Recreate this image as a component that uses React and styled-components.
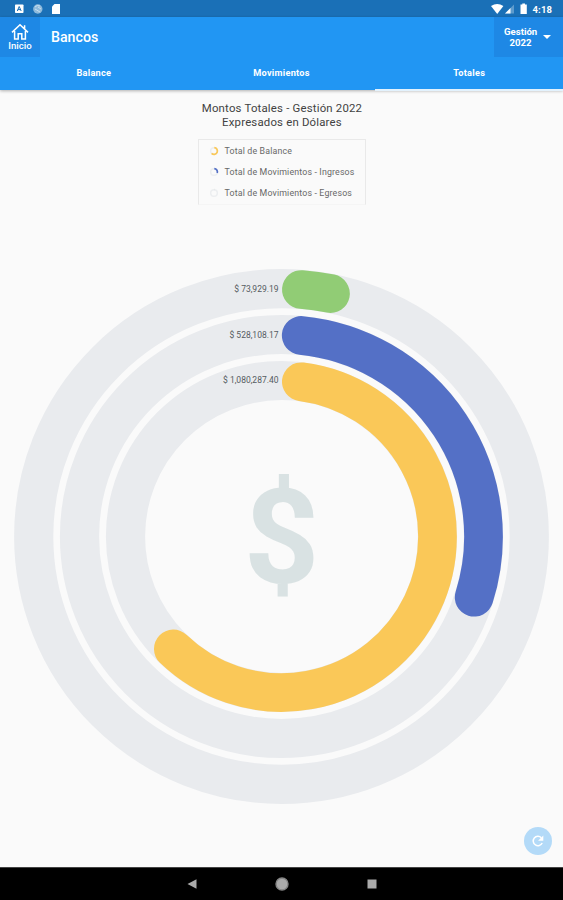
import React from "react";
import styled, { createGlobalStyle } from "styled-components";

const GlobalStyle = createGlobalStyle`
  * {
    box-sizing: border-box;
  }

  body {
    margin: 0;
    background-color: #fafafa;
    font-family: Roboto, "Liberation Sans", sans-serif;
  }
`;

const Screen = styled.div`
  display: flex;
  flex-direction: column;
  width: 563px;
  height: 900px;
  overflow: hidden;
  background-color: #fafafa;
`;

const StatusBar = styled.div`
  display: flex;
  flex: none;
  justify-content: space-between;
  height: 17px;
  padding: 0 11px 0 14px;
  background-color: #1a70b7;
  color: white;
`;

const StatusText = styled.span`
  font-size: 9.5px;
  font-weight: 700;
  line-height: 19px;
  letter-spacing: 0.1px;
`;

const StatusGroup = styled.div`
  display: flex;
`;

const Header = styled.header`
  flex: none;
  height: 73px;
  background-color: #2196f3;
  color: white;
  box-shadow: 0 1px 3px rgba(0, 0, 0, 0.3);
`;

const Toolbar = styled.div`
  display: flex;
  height: 40px;
`;

const HomeButton = styled.button`
  display: flex;
  flex-direction: column;
  align-items: center;
  width: 40px;
  padding: 6px 0 0;
  border: none;
  background-color: #1e88e5;
  color: white;
  font-family: inherit;
  font-size: 9.6px;
  font-weight: 500;
  line-height: 12px;
`;

const Title = styled.h1`
  flex: 1;
  margin: 0;
  padding-left: 11px;
  font-size: 14.2px;
  font-weight: 500;
  line-height: 41px;
`;

const YearButton = styled.button`
  display: flex;
  align-items: center;
  width: 69px;
  padding: 0 12px 0 10px;
  justify-content: space-between;
  border: none;
  background-color: #1e88e5;
  color: white;
  font-family: inherit;
  font-size: 9.6px;
  font-weight: 700;
  line-height: 11px;
  text-align: center;
`;

const Caret = styled.span`
  border: 4px solid transparent;
  border-top-color: white;
  border-bottom: none;
`;

const Tabs = styled.nav`
  display: grid;
  grid-template-columns: repeat(3, 1fr);
  height: 33px;
`;

const Tab = styled.div`
  border-bottom: 2px solid ${(props) => (props.$active ? "#e3f2fd" : "transparent")};
  font-size: 9.2px;
  font-weight: 700;
  letter-spacing: 0.25px;
  line-height: 32px;
  text-align: center;
`;

const Content = styled.main`
  display: flex;
  flex: 1;
  flex-direction: column;
  align-items: center;
  min-height: 0;
`;

const Heading = styled.h2`
  margin: 11px 0 0;
  padding-left: 1px;
  color: #424242;
  font-size: 11.4px;
  font-weight: 400;
  line-height: 14px;
  letter-spacing: 0.19px;
  text-align: center;
`;

const Legend = styled.div`
  display: flex;
  flex-direction: column;
  width: 168px;
  height: 66px;
  margin-top: 10px;
  border: 1px solid #e9e9e9;
  border-bottom-color: #f5f5f5;
`;

const LegendItem = styled.div`
  display: flex;
  align-items: center;
  gap: 6px;
  height: 21px;
  padding-left: 10px;
  color: #686868;
  font-size: 8.8px;
  letter-spacing: 0.16px;
  white-space: nowrap;
`;

const Chart = styled.svg`
  display: block;
  margin-top: 54px;
`;

const ChartLabel = styled.text`
  fill: #555b61;
  font-size: 8.5px;
  text-anchor: end;
`;

const Dollar = styled.text`
  fill: #d9e2e3;
  font-size: 132px;
  font-weight: 700;
  text-anchor: middle;
`;

const Footer = styled.div`
  display: flex;
  justify-content: flex-end;
  width: 100%;
  margin-top: 18px;
  padding-right: 11px;
`;

const RefreshButton = styled.button`
  display: flex;
  align-items: center;
  justify-content: center;
  width: 28px;
  height: 28px;
  padding: 0;
  border: none;
  border-radius: 50%;
  background-color: #b3daf8;
`;

const NavBar = styled.div`
  display: grid;
  flex: none;
  grid-template-columns: repeat(3, 90px);
  justify-content: center;
  align-items: center;
  justify-items: center;
  height: 33px;
  border-top: 1px solid #444;
  background-color: black;
`;

const CENTER = 281.5;
const MIDDLE = 277.5;
const BAR_WIDTH = 39.2;

const rings = [
  { label: "$ 73,929.19", radius: 247.8, start: 4.6, end: 11.4, color: "#91cc75", labelY: 32.5 },
  { label: "$ 528,108.17", radius: 202, start: 5.6, end: 107.5, color: "#5470c6", labelY: 78.5 },
  { label: "$ 1,080,287.40", radius: 156, start: 7.3, end: 223.9, color: "#fac858", labelY: 124 },
];

const legendItems = [
  { text: "Total de Balance", color: "#fac858", end: 224 },
  { text: "Total de Movimientos - Ingresos", color: "#5470c6", end: 107 },
  { text: "Total de Movimientos - Egresos", color: "#e0e2e4", end: 12 },
];

// angles are in degrees, clockwise from twelve o'clock
const arcPath = (cx, cy, radius, start, end) => {
  const point = (angle) => {
    const rad = (angle * Math.PI) / 180;
    return `${cx + radius * Math.sin(rad)} ${cy - radius * Math.cos(rad)}`;
  };
  const large = end - start > 180 ? 1 : 0;
  return `M${point(start)} A${radius} ${radius} 0 ${large} 1 ${point(end)}`;
};

const StatusIcons = () => (
  <svg width="60" height="17" viewBox="0 0 60 17">
    <rect x="1" y="4.5" width="8.5" height="8.5" rx="0.7" fill="#fff" />
    <path d="M3.3 11 L5.2 6.5 L7.2 11 M4 9.6 H6.5" stroke="#1a70b7" strokeWidth="1" fill="none" />
    <circle cx="23.8" cy="9" r="4.7" fill="#8ebadc" />
    <path d="M21 7 a4 4 0 0 1 5-1 M21 9 l5 3 M24 7 l3 2" stroke="#c7dfef" strokeWidth="1" fill="none" />
    <path d="M40.5 4 H46 V14 H38 V6.5 Z" fill="#fff" />
  </svg>
);

const SignalIcons = () => (
  <svg width="42" height="17" viewBox="0 0 42 17">
    <path d="M0 6 Q6.2 2 12.4 6 L6.2 14 Z" fill="#fff" />
    <path d="M14 13.5 L23 4.5 V13.5 Z" fill="#5d9bcd" />
    <path d="M14 13.5 L19.5 8 V13.5 Z" fill="#fff" />
    <path d="M29.5 4.5 H31.3 V3.5 H34 V4.5 H35.8 V14 H29.5 Z" fill="#fff" />
  </svg>
);

const HomeIcon = () => (
  <svg width="18" height="17" viewBox="0 0 18 17" fill="none" stroke="white" strokeWidth="1.5">
    <path d="M1 9.4 L9 1.8 L17 9.4 M13.6 5.8 V2.3 M3.6 8 V16 H7.2 V10.7 H10.8 V16 H14.4 V8" />
  </svg>
);

const LegendMark = ({ color, end }) => (
  <svg width="10" height="10" viewBox="0 0 10 10" fill="none">
    <circle cx="5" cy="5" r="3.3" stroke="#eceef0" strokeWidth="1.5" />
    <path d={arcPath(5, 5, 3.4, 5, end)} stroke={color} strokeWidth="1.7" />
  </svg>
);

const TotalsChart = () => (
  <Chart width="563" height="550" viewBox="0 0 563 550">
    {rings.map((ring) => (
      <g key={ring.label} fill="none" strokeWidth={BAR_WIDTH}>
        <circle cx={CENTER} cy={MIDDLE} r={ring.radius} stroke="#e9ebee" />
        <path
          d={arcPath(CENTER, MIDDLE, ring.radius, ring.start, ring.end)}
          stroke={ring.color}
          strokeWidth={BAR_WIDTH - 0.5}
          strokeLinecap="round"
        />
      </g>
    ))}
    {rings.map((ring) => (
      <ChartLabel key={ring.label} x="278.5" y={ring.labelY}>
        {ring.label}
      </ChartLabel>
    ))}
    <Dollar x="281.5" y="323.7">
      $
    </Dollar>
  </Chart>
);

const App = () => {
  return (
    <>
      <GlobalStyle />
      <Screen>
        <StatusBar>
          <StatusIcons />
          <StatusGroup>
            <SignalIcons />
            <StatusText>4:18</StatusText>
          </StatusGroup>
        </StatusBar>
        <Header>
          <Toolbar>
            <HomeButton>
              <HomeIcon />
              Inicio
            </HomeButton>
            <Title>Bancos</Title>
            <YearButton>
              <span>
                Gestión
                <br />
                2022
              </span>
              <Caret />
            </YearButton>
          </Toolbar>
          <Tabs>
            <Tab>Balance</Tab>
            <Tab>Movimientos</Tab>
            <Tab $active>Totales</Tab>
          </Tabs>
        </Header>
        <Content>
          <Heading>
            Montos Totales - Gestión 2022
            <br />
            Expresados en Dólares
          </Heading>
          <Legend>
            {legendItems.map((item) => (
              <LegendItem key={item.text}>
                <LegendMark color={item.color} end={item.end} />
                {item.text}
              </LegendItem>
            ))}
          </Legend>
          <TotalsChart />
          <Footer>
            <RefreshButton>
              <svg width="14" height="14" viewBox="0 0 14 14">
                <path d="M11.2 9 A4.7 4.7 0 1 1 10.3 3.7" fill="none" stroke="white" strokeWidth="1.5" />
                <path d="M12.3 1.5 V6.7 H7.1 Z" fill="white" />
              </svg>
            </RefreshButton>
          </Footer>
        </Content>
        <NavBar>
          <svg width="10" height="10" viewBox="0 0 10 10">
            <path d="M0.5 5 L9.5 0.3 V9.7 Z" fill="#aaa" />
          </svg>
          <svg width="14" height="14" viewBox="0 0 14 14">
            <circle cx="7" cy="7" r="6" fill="#aaa" stroke="#858585" strokeWidth="1.4" />
          </svg>
          <svg width="10" height="10" viewBox="0 0 10 10">
            <rect x="0.5" y="0.5" width="9" height="9" fill="#aaa" />
          </svg>
        </NavBar>
      </Screen>
    </>
  );
};

export default App;
